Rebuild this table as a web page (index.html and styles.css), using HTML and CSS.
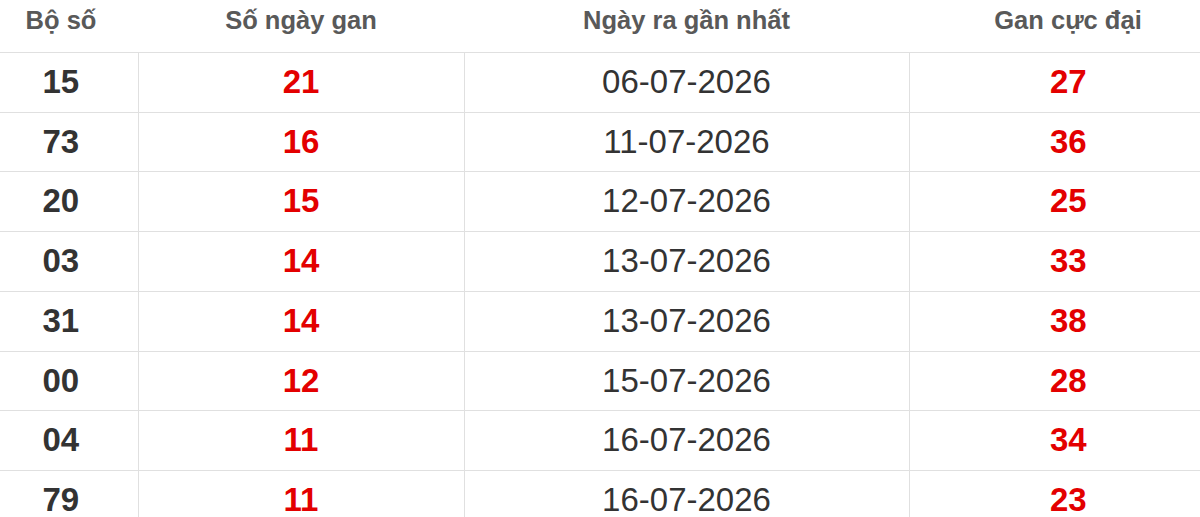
FILE: index.html
```html
<!DOCTYPE html>
<html lang="vi">
<head>
<meta charset="utf-8">
<link rel="stylesheet" href="styles.css">
</head>
<body>
<table class="gan">
  <colgroup>
    <col class="c1"><col class="c2"><col class="c3"><col class="c4">
  </colgroup>
  <thead>
    <tr><th>Bộ số</th><th>Số ngày gan</th><th>Ngày ra gần nhất</th><th>Gan cực đại</th></tr>
  </thead>
  <tbody>
    <tr><td class="num">15</td><td class="red">21</td><td class="date">06-07-2026</td><td class="red">27</td></tr>
    <tr><td class="num">73</td><td class="red">16</td><td class="date">11-07-2026</td><td class="red">36</td></tr>
    <tr><td class="num">20</td><td class="red">15</td><td class="date">12-07-2026</td><td class="red">25</td></tr>
    <tr><td class="num">03</td><td class="red">14</td><td class="date">13-07-2026</td><td class="red">33</td></tr>
    <tr><td class="num">31</td><td class="red">14</td><td class="date">13-07-2026</td><td class="red">38</td></tr>
    <tr><td class="num">00</td><td class="red">12</td><td class="date">15-07-2026</td><td class="red">28</td></tr>
    <tr><td class="num">04</td><td class="red">11</td><td class="date">16-07-2026</td><td class="red">34</td></tr>
    <tr><td class="num">79</td><td class="red">11</td><td class="date">16-07-2026</td><td class="red">23</td></tr>
  </tbody>
</table>
</body>
</html>
```
FILE: styles.css
```css
html, body {
  margin: 0;
  padding: 0;
  background: #fff;
  overflow: hidden;
}
body {
  font-family: "Liberation Sans", Arial, sans-serif;
}
.gan {
  border-collapse: collapse;
  table-layout: fixed;
  width: 1243px;
  margin-left: -16px;
}
.c1 { width: 154px; }
.c2 { width: 326px; }
.c3 { width: 445px; }
.c4 { width: 318px; }
.gan th {
  font-size: 25.5px;
  font-weight: bold;
  color: #595959;
  line-height: 30px;
  padding: 5px 0 17px;
  text-align: center;
  border-bottom: 1px solid #e0e0e0;
}
.gan td {
  font-size: 33px;
  line-height: 58.7px;
  padding: 0;
  text-align: center;
  border-bottom: 1px solid #e0e0e0;
  border-left: 1px solid #e0e0e0;
  color: #333;
}
.gan td:first-child { border-left: none; }
.num { font-weight: bold; color: #2b2b2b; }
.red { font-weight: bold; color: #e30000 !important; }
.date { font-weight: normal; }
```
